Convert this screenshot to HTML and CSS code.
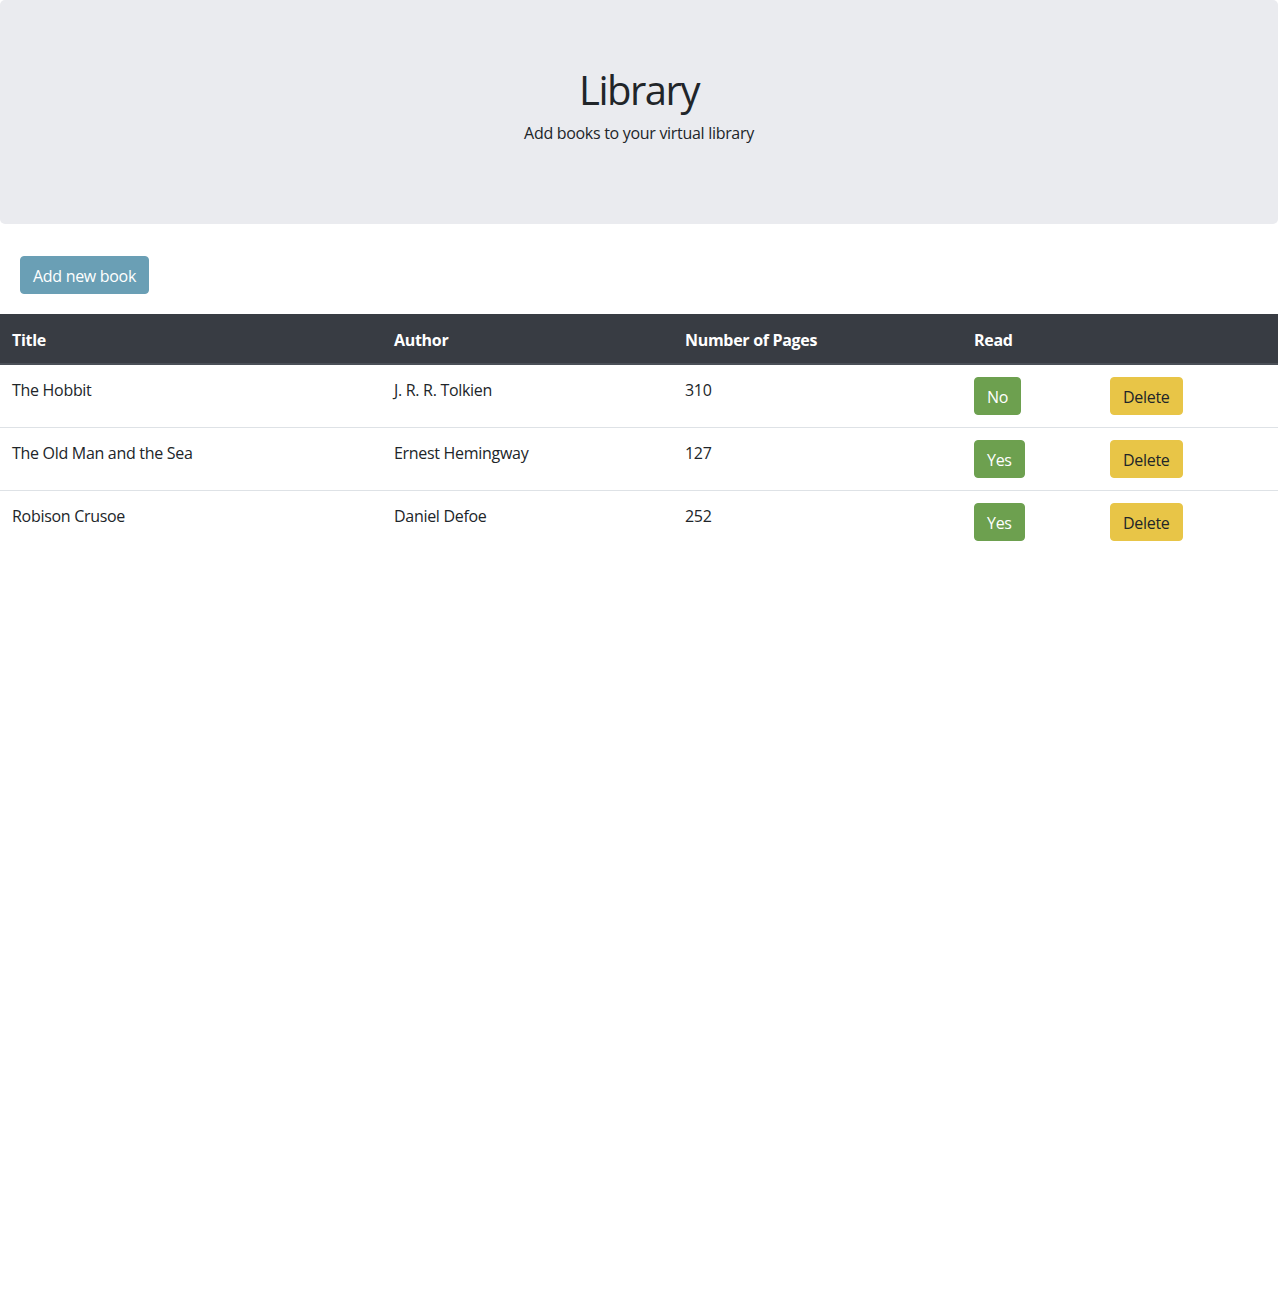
FILE: index.html
```html
<!DOCTYPE html>
<html lang="en">
<head>
<meta charset="utf-8">
<title>Library</title>
<link rel="stylesheet" href="styles.css">
</head>
<body>
<header class="jumbotron">
  <h1 class="title">Library</h1>
  <p class="lead">Add books to your virtual library</p>
</header>
<div class="actions">
  <button class="btn btn-info" type="button">Add new book</button>
</div>
<table class="table">
  <thead>
    <tr>
      <th class="c-title">Title</th>
      <th class="c-author">Author</th>
      <th class="c-pages">Number of Pages</th>
      <th class="c-read">Read</th>
      <th class="c-del"></th>
    </tr>
  </thead>
  <tbody>
    <tr>
      <td>The Hobbit</td>
      <td>J. R. R. Tolkien</td>
      <td>310</td>
      <td><button class="btn btn-green" type="button">No</button></td>
      <td><button class="btn btn-yellow" type="button">Delete</button></td>
    </tr>
    <tr>
      <td>The Old Man and the Sea</td>
      <td>Ernest Hemingway</td>
      <td>127</td>
      <td><button class="btn btn-green" type="button">Yes</button></td>
      <td><button class="btn btn-yellow" type="button">Delete</button></td>
    </tr>
    <tr>
      <td>Robison Crusoe</td>
      <td>Daniel Defoe</td>
      <td>252</td>
      <td><button class="btn btn-green" type="button">Yes</button></td>
      <td><button class="btn btn-yellow" type="button">Delete</button></td>
    </tr>
  </tbody>
</table>
</body>
</html>
```
FILE: styles.css
```css
* { box-sizing: border-box; }
html, body {
  margin: 0;
  padding: 0;
  background: #fff;
}
body {
  font-family: "Open Sans", "Noto Sans", sans-serif;
  font-size: 16px;
  line-height: 1.5;
  color: #212529;
  letter-spacing: -0.3px;
}
.jumbotron {
  background: #eaebef;
  border-radius: 5px;
  padding: 66px 32px 64px;
  margin-bottom: 32px;
  text-align: center;
}
.title {
  margin: 0 0 7px;
  font-size: 40px;
  font-weight: 400;
  line-height: 1.2;
  letter-spacing: -1.5px;
}
.lead {
  margin: 0 0 15px;
  font-size: 16px;
}
.actions {
  padding: 0 20px;
  margin-bottom: 20px;
}
.btn {
  display: inline-block;
  font-family: inherit;
  font-size: 16px;
  line-height: 24px;
  letter-spacing: inherit;
  padding: 7px 12px 5px;
  border: 1px solid transparent;
  border-radius: 4px;
  cursor: pointer;
}
.btn-info { background: #6a9fb5; border-color: #6a9fb5; color: #fff; }
.btn-green { background: #6da04f; border-color: #6da04f; color: #fff; }
.btn-yellow { background: #e8c547; border-color: #e8c547; color: #212529; }
.table {
  width: 100%;
  border-collapse: collapse;
  table-layout: fixed;
}
.table th, .table td {
  padding: 13px 12px 11px;
  text-align: left;
  vertical-align: top;
}
.table td { padding-bottom: 12px; }
.table .btn { margin-top: -1px; vertical-align: top; }
.table thead th {
  background: #383c43;
  color: #fff;
  font-weight: 700;
  border-top: 1px solid #383c43;
  border-bottom: 2px solid #4a4f57;
}
.table tbody tr + tr td { border-top: 1px solid #dee2e6; }
.c-title { width: 382px; }
.c-author { width: 291px; }
.c-pages { width: 289px; }
.c-read { width: 136px; }
.c-del { width: 180px; }
```
